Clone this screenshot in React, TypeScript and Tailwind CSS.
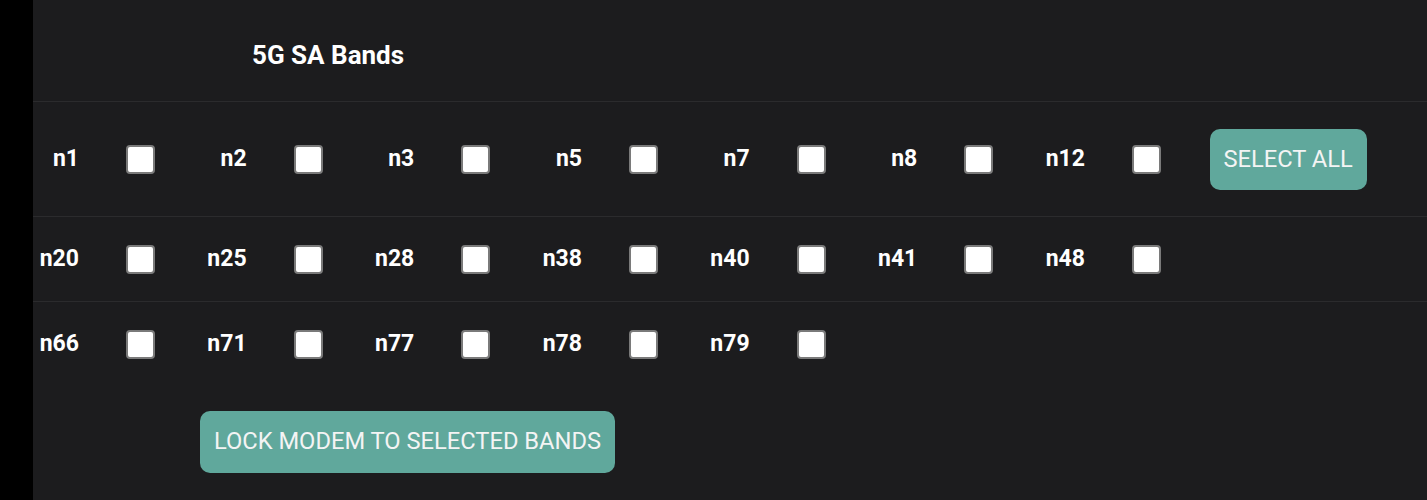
import React, { useState } from 'react'

const rows: string[][] = [
    ["n1", "n2", "n3", "n5", "n7", "n8", "n12"],
    ["n20", "n25", "n28", "n38", "n40", "n41", "n48"],
    ["n66", "n71", "n77", "n78", "n79"],
]

function BandCell({ band, checked, onToggle }: { band: string, checked: boolean, onToggle: () => void }) {
    return (
        <div className='flex items-center w-[167.67px] shrink-0'>
            <span className='w-[46px] text-right font-bold text-[23px] text-white'>{band}</span>
            <input
                type="checkbox"
                checked={checked}
                onChange={onToggle}
                className='ml-[47px] appearance-none w-[29px] h-[29px] bg-white border-2 border-[#7a7a7a] rounded-[4px] checked:bg-[#60a89c]'
            />
        </div>
    )
}

export default function App() {
    const [selected, setSelected] = useState<Record<string, boolean>>({})

    const toggle = (band: string) => {
        setSelected(prev => ({ ...prev, [band]: !prev[band] }))
    }

    const selectAll = () => {
        const all: Record<string, boolean> = {}
        rows.flat().forEach(b => all[b] = true)
        setSelected(all)
    }

    return (
        <div className='flex w-full h-[500px] bg-black font-["Roboto","Liberation_Sans",sans-serif]'>
            <div className='w-[33px] shrink-0 bg-black'></div>

            <div className='flex flex-col flex-1 bg-[#1c1c1e]'>
                {/* Title */}
                <div className='flex items-center h-[102px] pl-[219px] pt-[10px] border-b border-[#2b2b2d]'>
                    <h1 className='text-white font-bold text-[26px]'>5G SA Bands</h1>
                </div>

                {/* Row 1 */}
                <div className='flex items-center h-[115px] pt-[1px] border-b border-[#2b2b2d]'>
                    {rows[0].map(b => (
                        <BandCell key={b} band={b} checked={!!selected[b]} onToggle={() => toggle(b)} />
                    ))}
                    <button
                        onClick={selectAll}
                        className='ml-[3px] w-[157px] h-[61px] rounded-[10px] bg-[#60a89c] text-[#f4f4f4] text-[23.7px]'
                    >SELECT ALL</button>
                </div>

                {/* Row 2 */}
                <div className='flex items-center h-[85px] pt-[1px] border-b border-[#2b2b2d]'>
                    {rows[1].map(b => (
                        <BandCell key={b} band={b} checked={!!selected[b]} onToggle={() => toggle(b)} />
                    ))}
                </div>

                {/* Row 3 */}
                <div className='flex items-center h-[84px] pt-[1px]'>
                    {rows[2].map(b => (
                        <BandCell key={b} band={b} checked={!!selected[b]} onToggle={() => toggle(b)} />
                    ))}
                </div>

                {/* Lock */}
                <div className='flex pl-[167px] pt-[25px]'>
                    <button className='w-[415px] h-[62px] rounded-[10px] bg-[#60a89c] text-[#f4f4f4] text-[23.7px]'>
                        LOCK MODEM TO SELECTED BANDS
                    </button>
                </div>
            </div>
        </div>
    )
}
